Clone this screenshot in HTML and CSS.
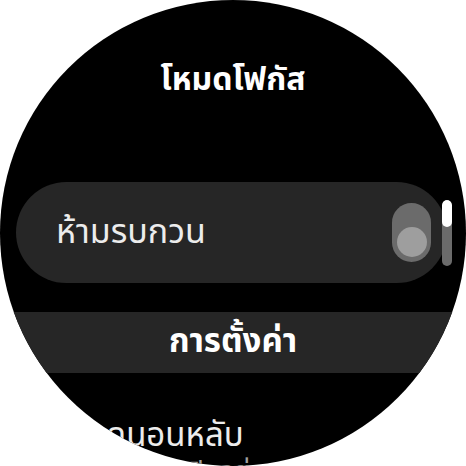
FILE: index.html
```html
<!DOCTYPE html>
<html lang="th">
<head>
<meta charset="utf-8">
<link rel="stylesheet" href="styles.css">
</head>
<body>
<div class="watch">
  <div class="title">โหมดโฟกัส</div>
  <div class="card">
    <span class="card-label">ห้ามรบกวน</span>
    <span class="toggle"><span class="thumb"></span></span>
  </div>
  <div class="band">การตั้งค่า</div>
  <div class="item">
    <div class="item-label">โหมดนอนหลับ</div>
    <div class="item-sub">ปิดอยู่</div>
  </div>
  <div class="scrollbar"><span class="scroll-thumb"></span></div>
</div>
</body>
</html>
```
FILE: styles.css
```css
html, body {
  margin: 0;
  padding: 0;
  background: #ffffff;
}
.watch {
  position: relative;
  width: 466px;
  height: 466px;
  border-radius: 50%;
  overflow: hidden;
  background: #000000;
  font-family: "Noto Sans Thai", "Noto Sans", "Open Sans", sans-serif;
  color: #f2f2f2;
  display: flex;
  flex-direction: column;
}
.watch > * {
  flex-shrink: 0;
}
.title {
  margin-top: 60px;
  height: 40px;
  line-height: 40px;
  text-align: center;
  font-size: 32px;
  font-weight: 700;
  color: #ffffff;
}
.card {
  margin-top: 82px;
  margin-left: 16px;
  width: 431px;
  height: 101px;
  box-sizing: border-box;
  border-radius: 51px;
  background: #262626;
  display: flex;
  align-items: center;
  justify-content: space-between;
  padding: 0 16px 0 40px;
}
.card-label {
  font-size: 34px;
  color: #ececec;
  line-height: 44px;
}
.toggle {
  width: 39px;
  height: 59px;
  border-radius: 20px;
  background: #6b6b6b;
  display: flex;
  flex-direction: column;
  justify-content: flex-end;
  align-items: center;
  padding-bottom: 5px;
  box-sizing: border-box;
}
.thumb {
  width: 30px;
  height: 30px;
  border-radius: 50%;
  background: #9e9e9e;
}
.band {
  margin-top: 29px;
  height: 61px;
  background: #262626;
  text-align: center;
  line-height: 61px;
  font-size: 33px;
  font-weight: 700;
  color: #ffffff;
}
.item {
  margin-top: 41px;
  padding-left: 56px;
}
.item-label {
  font-size: 33px;
  line-height: 44px;
  color: #ececec;
}
.item-sub {
  font-size: 26px;
  line-height: 28px;
  color: #a0a0a0;
  padding-left: 132px;
}
.scrollbar {
  position: absolute;
  left: 442px;
  top: 200px;
  width: 10px;
  height: 66px;
  border-radius: 5px;
  background: #6b6b6b;
  overflow: hidden;
}
.scroll-thumb {
  display: block;
  width: 10px;
  height: 27px;
  border-radius: 5px;
  background: #ffffff;
}
```
